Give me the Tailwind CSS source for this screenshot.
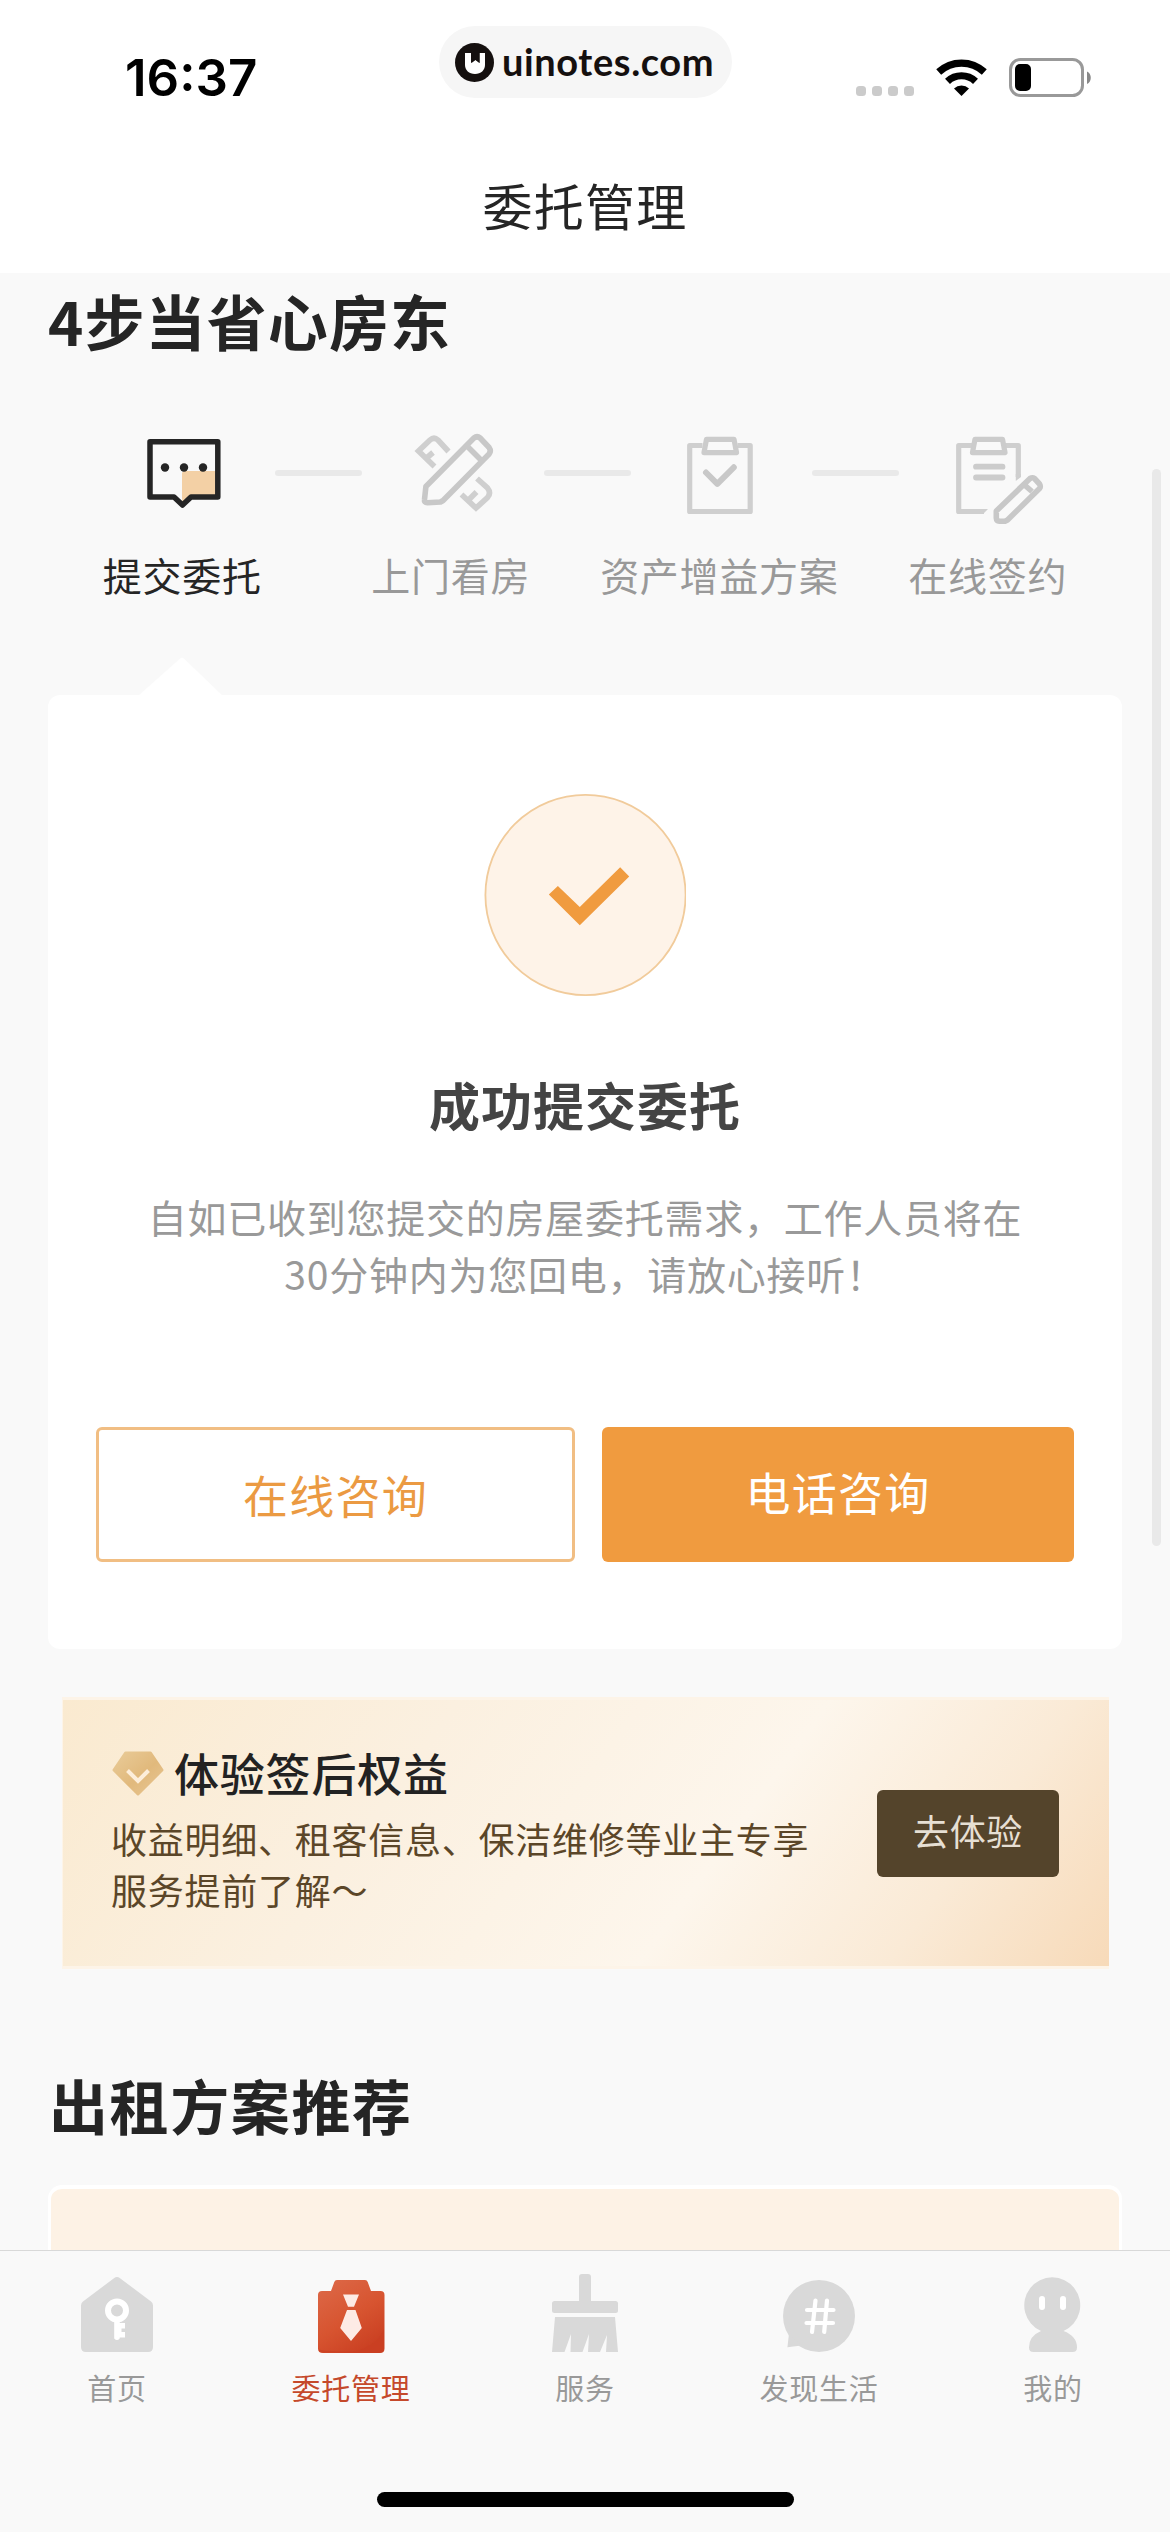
<!DOCTYPE html>
<html lang="zh-CN">
<head>
<meta charset="utf-8">
<title>委托管理</title>
<script src="https://cdn.jsdelivr.net/npm/@tailwindcss/browser@4"></script>
</head>
<body class="bg-[#f9f9f9]">
<div class="relative flex h-[2532px] w-[1170px] flex-col overflow-hidden bg-[#f9f9f9] font-['Noto_Sans_CJK_SC',sans-serif] text-[#252525]">

  <!-- Status bar and page title -->
  <header class="h-[273px] shrink-0 bg-white">
    <div class="flex h-[144px] items-start">
      <div class="ml-[125px] mt-[48px] w-[314px] font-['Inter',sans-serif] text-[51px] font-semibold leading-[60px] tracking-[0px] text-black">16:37</div>
      <div class="mt-[26px] flex h-[72px] w-[293px] items-center rounded-full bg-[#f6f6f6] pl-[16px]">
        <svg class="size-[39px] shrink-0" viewBox="0 0 39 39"><circle cx="19.5" cy="19.5" r="19.5" fill="#15100f"/><path d="M10 10h6.500v10l4-3 4 3V10H30v12c0 5-4 9-10 9s-10-4-10-9z" fill="#fff"/><path d="M16 8h8.500v12l-4.200-3.500L16 20z" fill="#15100f"/></svg>
        <span class="ml-[8px] mt-[-2px] font-['Lato',sans-serif] text-[38px] font-bold leading-[48px] tracking-[0.600px] text-[#15100f]">uinotes.com</span>
      </div>
      <svg class="ml-[118px] mt-[50px] h-[54px] w-[250px]" viewBox="850 50 250 54">
        <g fill="#cbcbcb"><rect x="856" y="86" width="10" height="10" rx="3.500"/><rect x="872" y="86" width="10" height="10" rx="3.500"/><rect x="888" y="86" width="10" height="10" rx="3.500"/><rect x="904" y="86" width="10" height="10" rx="3.500"/></g>
        <path d="M961.500 96l-7.500-7.600a11 11 0 0 1 15 0z"/>
        <g fill="none" stroke="#000" stroke-width="7.200"><path d="M947.500 81.300a20.500 20.500 0 0 1 28 0"/><path d="M938.700 72a33.500 33.500 0 0 1 45.600 0"/></g>
        <rect x="1010.500" y="59.500" width="72" height="36" rx="10" fill="none" stroke="#999" stroke-width="3"/>
        <rect x="1015" y="64" width="16" height="27" rx="5"/>
        <path d="M1087 71.500c5 2 5 10.500 0 12.500z" fill="#888"/>
      </svg>
    </div>
    <h1 class="mt-[23px] text-center text-[50px] leading-[74px] tracking-[1.200px]">委托管理</h1>
  </header>

  <main class="h-[1977px] shrink-0 overflow-hidden px-[48px]">
    <h2 class="mt-[4px] text-[60px] font-bold leading-[86px] tracking-[1.100px]">4步当省心房东</h2>

    <!-- Progress steps -->
    <div class="mt-[67px] flex h-[100px] items-start pl-[74px]">
      <svg class="h-[100px] w-[120px] shrink-0" viewBox="122 430 120 100">
        <path d="M182 498V474a3 3 0 0 1 3-3h33v27h-26l-9 9z" fill="#f3d0a5"/>
        <path d="M150 441.700h67.800v55.300H191l-8.500 8-8.500-8h-24z" fill="none" stroke="#252525" stroke-width="5.500" stroke-linejoin="round"/>
        <g fill="#252525"><circle cx="165" cy="467.500" r="4.200"/><circle cx="184" cy="467.500" r="4.200"/><circle cx="203" cy="467.500" r="4.200"/></g>
      </svg>
      <i class="ml-[33px] mr-[28.500px] mt-[40px] h-[6px] w-[87px] shrink-0 rounded-full bg-[#e9e9e9]"></i>
      <svg class="h-[100px] w-[120px] shrink-0" viewBox="390.500 430 120 100" fill="none" stroke-width="5.600">
        <g stroke="#cfcfcf"><path d="M448 451.500l-10.500-11.500q-4-3.500-8 0L418 451l16 15.500M425.500 458.500l7-6"/><path d="M476.500 478.500l10.500 9.500q4 5 0 9.500L475.500 508 461 494.500M468 500l8-8"/></g>
        <path d="M424 499.500l1.400-13 48-48.500q3.200-2.500 6.200 0l9 9.500q2.400 3.500 0 6.500l-46 46.500-2.600 1.500-13 .8q-3.500-.3-3-3.300zM468 447.500l12.500 12.500" stroke="#c8c8c8" stroke-linejoin="round"/>
      </svg>
      <i class="ml-[33px] mr-[28.500px] mt-[40px] h-[6px] w-[87px] shrink-0 rounded-full bg-[#e9e9e9]"></i>
      <svg class="h-[100px] w-[120px] shrink-0" viewBox="658.500 430 120 100" fill="none" stroke-linejoin="round">
        <path d="M702 445.500h-12.800v66h60.500v-66H737" stroke="#cfcfcf" stroke-width="5.200"/>
        <path d="M706 439.300h27.500l2.500 13.300h-32.500z" stroke="#cccccc" stroke-width="5.200"/>
        <path d="M705.500 472.500l11.300 11.300 16.500-16.500" stroke="#c8c8c8" stroke-width="6" stroke-linecap="round"/>
      </svg>
      <i class="ml-[33px] mr-[28.500px] mt-[40px] h-[6px] w-[87px] shrink-0 rounded-full bg-[#e9e9e9]"></i>
      <svg class="h-[100px] w-[120px] shrink-0" viewBox="927 430 120 100" fill="none" stroke-linejoin="round">
        <path d="M1017.300 477v-31.500H1004M971 445.500h-13.300v66H983" stroke="#cfcfcf" stroke-width="5.200"/>
        <path d="M1020 474v3l-5.200 4v-7zM982 509h5l-5 5z" fill="#cfcfcf"/>
        <path d="M974 439.300h27.500l2.500 13.300h-32.500z" stroke="#cccccc" stroke-width="5.200"/>
        <path d="M975 466.700h26.500M975 477.500h26.500" stroke="#cccccc" stroke-width="5.800" stroke-linecap="round"/>
        <path d="M995.300 511l33.700-32.500q2.500-1.500 4.500 0l5 5.500q1.500 2.500 0 4.500l-32 31.500-2.500 1.300h-5.500q-3-.3-3.200-3.300zM1023.500 485l7.500 6.500" stroke="#c8c8c8" stroke-width="5.600"/>
      </svg>
    </div>
    <div class="mt-[16px] grid grid-cols-4 whitespace-nowrap text-center text-[39px] leading-[56px] tracking-[0.700px] text-[#999]">
      <span class="text-[#252525]">提交委托</span><span>上门看房</span><span>资产增益方案</span><span>在线签约</span>
    </div>

    <!-- Result card -->
    <svg class="ml-[90px] mt-[55px] block h-[38px] w-[88px]" viewBox="0 0 88 38"><path d="M1 38L41.500 2q2.500-2.300 5 0L84 38z" fill="#fff"/></svg>
    <section class="flex h-[954px] flex-col items-center rounded-[12px] bg-white pt-[99px]">
      <svg class="size-[202px]" viewBox="484.500 794 201 201"><circle cx="585.500" cy="894.500" r="99.600" fill="#fef3e8" stroke="#f1cb9b" stroke-width="1.800"/><path d="M549 894l9-8.500 21.800 21 40.200-39.500 9 9-49.200 48.700z" fill="#f09b3f"/></svg>
      <h3 class="mt-[70px] text-[51px] font-bold leading-[76px] tracking-[1px] text-[#444]">成功提交委托</h3>
      <p class="mt-[46px] whitespace-nowrap text-center text-[39px] leading-[57px] tracking-[0.750px] text-[#999]">自如已收到您提交的房屋委托需求，工作人员将在<br>30分钟内为您回电，请放心接听！</p>
      <div class="mt-[125px] flex w-full pl-[48px] text-[45px] leading-[60px] tracking-[1.200px]">
        <button class="h-[135px] w-[479px] rounded-[6px] border-[3px] border-[#f1be83] text-[#eb9a42]">在线咨询</button>
        <button class="ml-[27px] h-[135px] w-[472px] rounded-[6px] bg-[#f09b3f] pb-[6px] text-white">电话咨询</button>
      </div>
    </section>

    <!-- Benefits banner -->
    <section class="ml-[14px] mt-[48px] flex h-[272px] w-[1047px] border-y-[3px] border-l border-[#fdf4e8] bg-[linear-gradient(126deg,#faead0_0%,#fbf0e0_32%,#fdf6ec_62%,#faead6_82%,#f7dab9_100%)] pl-[48px] pt-[44px]">
      <div class="w-[766px]">
        <div class="flex h-[60px] items-center">
          <svg class="h-[46px] w-[54px]" viewBox="111 1751 54 46">
            <defs><linearGradient id="gem" x1="0" y1="0" x2="1" y2="1"><stop offset="0" stop-color="#e9cb98"/><stop offset=".55" stop-color="#e1b97c"/><stop offset="1" stop-color="#e8c693"/></linearGradient></defs>
            <path d="M125.500 1753h25l11.500 17-24 24-24-24z" fill="url(#gem)" stroke="url(#gem)" stroke-width="3" stroke-linejoin="round"/>
            <path d="M127.500 1770.500l10.500 10.500 10.500-10.500" fill="none" stroke="#fdeeda" stroke-width="4"/>
          </svg>
          <h3 class="ml-[9px] mt-[-3px] text-[45px] font-medium leading-[60px] tracking-[0.800px] text-[#222]">体验签后权益</h3>
        </div>
        <p class="mt-[9px] whitespace-nowrap text-[36px] leading-[51px] tracking-[0.750px] text-[#5b4628]">收益明细、租客信息、保洁维修等业主专享<br>服务提前了解～</p>
      </div>
      <button class="mt-[46px] h-[87px] w-[182px] rounded-[6px] bg-[#54442b] pb-[8px] text-[36px] tracking-[0.600px] text-[#e6dfd3]">去体验</button>
    </section>

    <h2 class="mt-[93px] pl-[1px] text-[59px] font-bold leading-[86px] tracking-[1.600px]">出租方案推荐</h2>
    <section class="mt-[37px] h-[100px] rounded-t-[14px] border-x-[3px] border-t-[4px] border-white bg-[#fdf2e5]"></section>
  </main>

  <!-- Scroll indicator -->
  <div class="absolute left-[1152px] top-[469px] h-[1077px] w-[9px] rounded-full bg-[#e9e9e9]"></div>

  <!-- Tab bar -->
  <nav class="relative h-[282px] shrink-0 border-t border-[#d9d9d9] bg-[#f9f9f9]">
    <div class="grid grid-cols-5 justify-items-center pt-[19px] text-[29px] leading-[42px] tracking-[0.700px] text-[#999]">
      <a class="flex flex-col items-center">
        <svg class="h-[90px] w-[90px]" viewBox="72 2270 90 90"><path d="M114 2278.200q3-2.400 6 0l31 23.300q2 1.500 2 4V2347q0 5-5 5H86q-5 0-5-5v-41.500q0-2.500 2-4z" fill="#d9d9d9"/><circle cx="117" cy="2310.500" r="9" fill="none" stroke="#fff" stroke-width="6"/><path d="M114.200 2319h5.500v4h5.300v5.500h-3.500v3.500h3.500v5.500h-5.300v1q-2.700 3-5.500 0z" fill="#fff"/></svg>
        <span class="mt-[6px]">首页</span>
      </a>
      <a class="flex flex-col items-center text-[#c5492b]">
        <svg class="h-[90px] w-[90px]" viewBox="306 2270 90 90">
          <defs><linearGradient id="coat" x1="0" y1="0" x2=".6" y2="1"><stop offset="0" stop-color="#dd6a49"/><stop offset=".6" stop-color="#d75430"/><stop offset="1" stop-color="#cb4123"/></linearGradient></defs>
          <path d="M338 2280h27q2 0 2.700 2l3.300 9h9.500q4 0 4 4v53.500q0 4.500-4.500 4.500h-57q-5 0-5-4.500V2295q0-4 4-4h9l3.300-9q.7-2 2.700-2z" fill="url(#coat)"/>
          <path d="M383.800 2329v19q0 4.500-4.500 4.500h-56q-4 0-4.800-3 14 2.500 35 2 22-4 30.300-22.500z" fill="#c93f22" opacity=".65"/>
          <path d="M343 2294.500h16l-5 12.300h-6zM347 2310h8.500l6.300 18-10.800 13-10.800-13z" fill="#fdebe5"/>
        </svg>
        <span class="mt-[6px]">委托管理</span>
      </a>
      <a class="flex flex-col items-center">
        <svg class="h-[90px] w-[90px]" viewBox="540 2270 90 90" fill="#d9d9d9"><path d="M579 2302v-25q0-3 3-3h6q3 0 3 3v25z"/><rect x="552" y="2301" width="66" height="12" rx="2.500"/><path d="M555 2317h60l3 35h-12l1-17-7 17h-12l1-18-6.500 18h-12l.5-18-6.500 18h-12.500z"/></svg>
        <span class="mt-[6px]">服务</span>
      </a>
      <a class="flex flex-col items-center">
        <svg class="h-[90px] w-[90px]" viewBox="774 2270 90 90"><circle cx="819" cy="2316" r="36" fill="#d9d9d9"/><path d="M789 2334l-1.600 13.300 14-1.800z" fill="#d9d9d9"/><path d="M815.500 2300.500l-3.500 31.500M827 2300.500l-2.800 31.500M807 2310h26.500M806.500 2323h26.500" stroke="#fff" stroke-width="4.200" stroke-linecap="round"/></svg>
        <span class="mt-[6px]">发现生活</span>
      </a>
      <a class="flex flex-col items-center">
        <svg class="h-[90px] w-[90px]" viewBox="1008 2270 90 90"><path d="M1041 2331a28 28 0 1 1 22.500 0q13.500 5 13.500 16.500 0 4.500-4.500 4.500h-39q-4.500 0-4.500-4.500 0-11.500 12-16.500z" fill="#d9d9d9"/><rect x="1039" y="2296" width="6" height="14" rx="3" fill="#fff"/><rect x="1060" y="2296" width="6" height="14" rx="3" fill="#fff"/></svg>
        <span class="mt-[6px]">我的</span>
      </a>
    </div>
    <div class="mx-auto mt-[84px] h-[15px] w-[417px] rounded-full bg-black"></div>
  </nav>
</div>
</body>
</html>
